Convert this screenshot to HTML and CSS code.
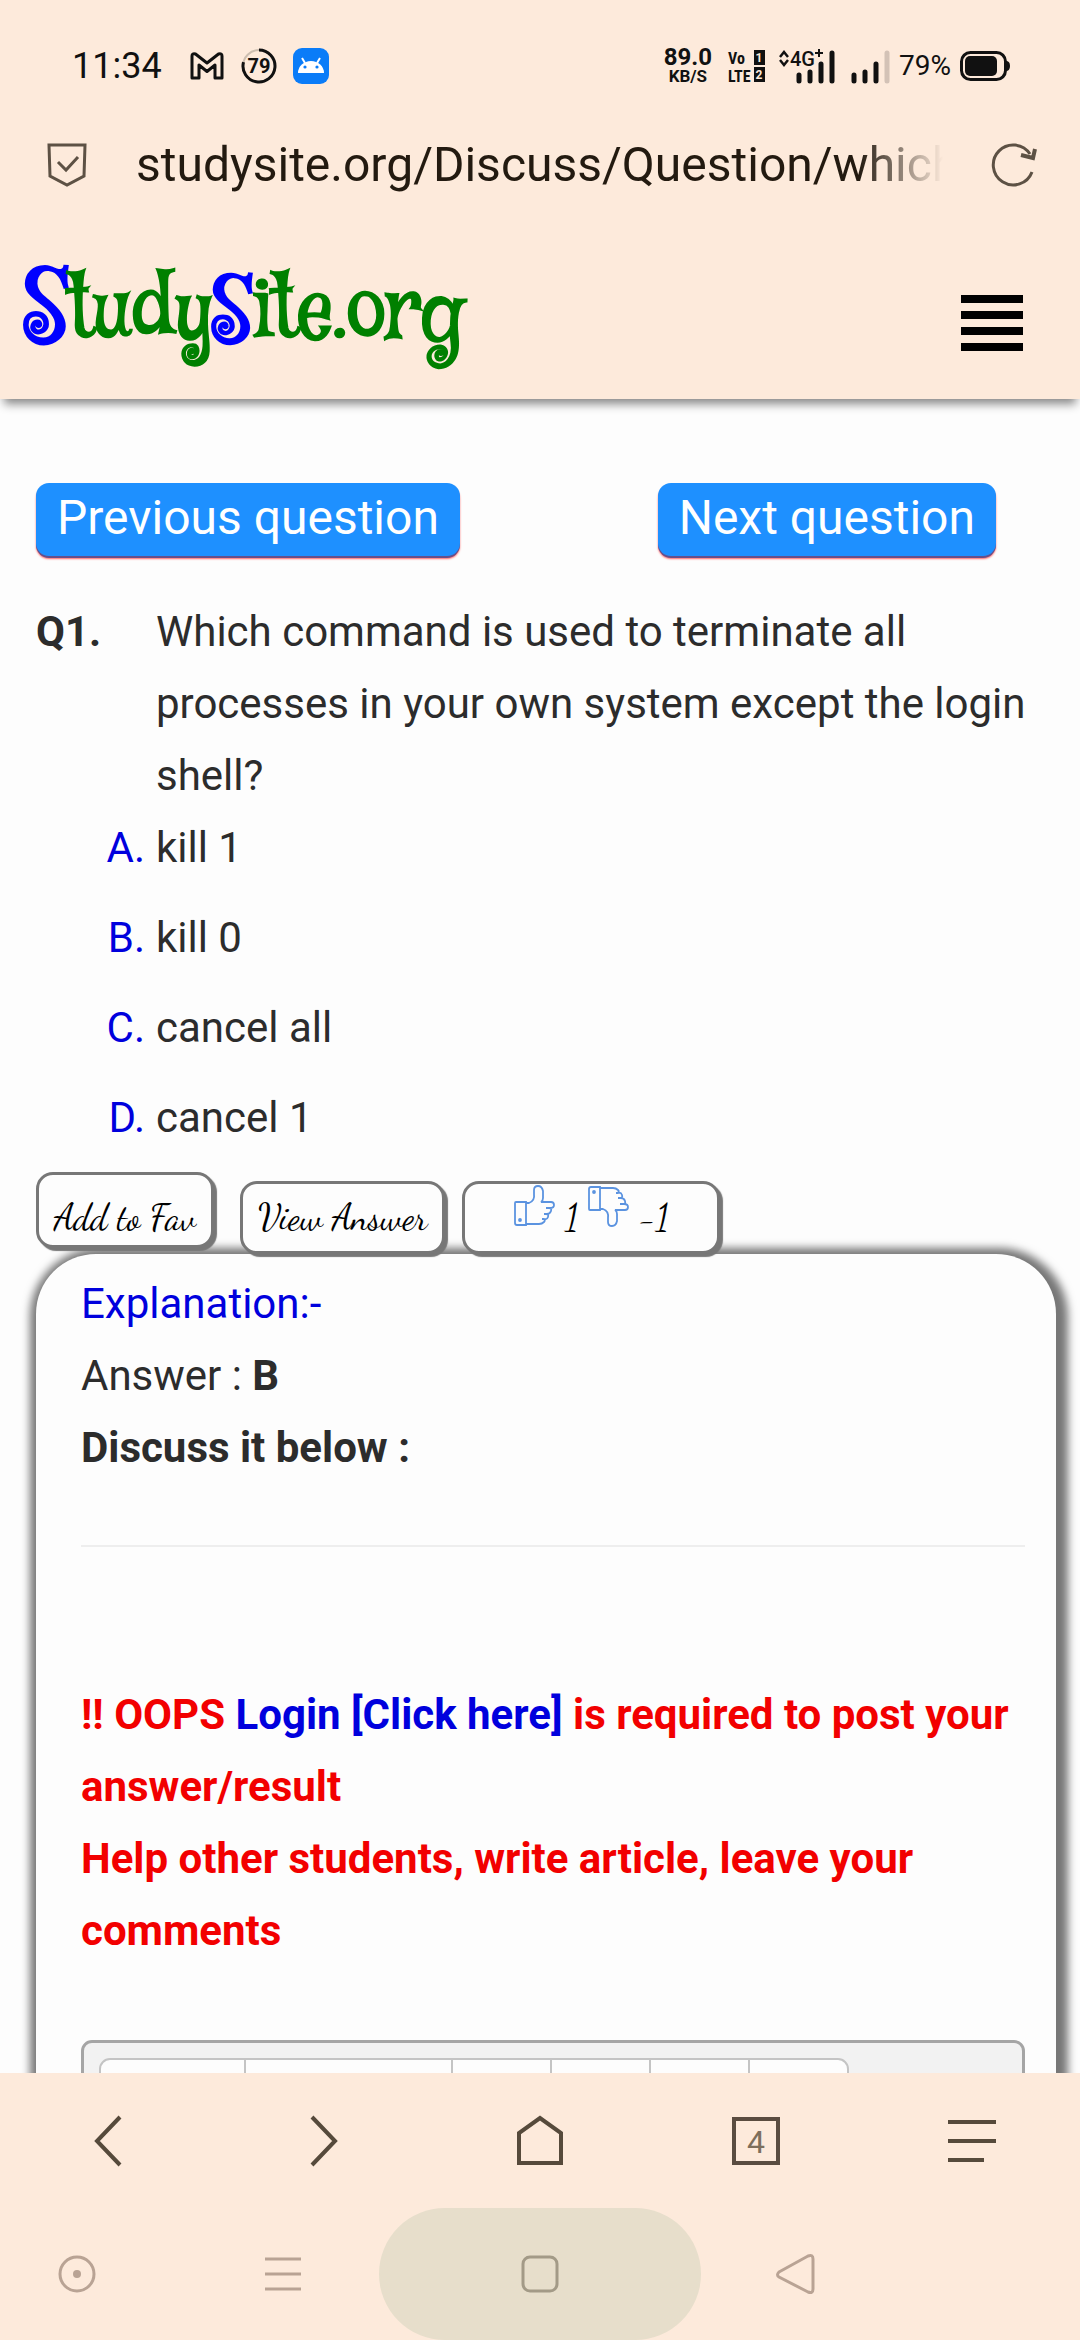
FILE: index.html
```html
<!DOCTYPE html>
<html lang="en">
<head>
<meta charset="utf-8">
<meta name="viewport" content="width=device-width, initial-scale=1">
<title>StudySite.org</title>
<link rel="stylesheet" href="styles.css">
</head>
<body>
<div class="status">
  <span class="clock">11:34</span>
  <svg class="s-mail" width="34" height="28" viewBox="0 0 34 28" fill="none" stroke="#111" stroke-width="3" stroke-linejoin="round"><path d="M2 4q0-3 3.500-2L17 11 28.500 2q3.500-1 3.500 2v22h-7V13l-8 6.500L9 13v13H2z"/></svg>
  <svg class="s-ring" width="36" height="36" viewBox="0 0 36 36"><circle cx="18" cy="18" r="16" fill="none" stroke="#cdbfb1" stroke-width="2"/><path d="M18 2A16 16 0 1 1 2.500 14" fill="none" stroke="#111" stroke-width="3"/><text x="18" y="25" text-anchor="middle" class="t-ring">79</text></svg>
  <svg class="s-droid" width="36" height="36" viewBox="0 0 36 36"><rect width="36" height="36" rx="9" fill="#0a7cf8"/><path d="M5 25a13 12 0 0 1 26 0z" fill="#fff"/><path d="M12 15l-3-5M24 15l3-5" stroke="#fff" stroke-width="2"/><circle cx="12" cy="19" r="1.600" fill="#0a7cf8"/><circle cx="24" cy="19" r="1.600" fill="#0a7cf8"/></svg>
  <div class="speed"><span class="rate">89.0</span><span class="unit">KB/S</span></div>
  <svg class="s-lte" width="38" height="34" viewBox="0 0 38 34"><text x="0" y="15" class="t-lte">Vo</text><text x="0" y="33" class="t-lte">LTE</text><rect x="26" y="1" width="11" height="15" fill="#111"/><rect x="26" y="18" width="11" height="15" fill="#111"/><text x="31" y="13" text-anchor="middle" class="t-sim">1</text><text x="31" y="30" text-anchor="middle" class="t-sim">2</text></svg>
  <svg class="s-sig" width="58" height="34" viewBox="0 0 58 34"><path d="M2 8l4-5 4 5M2 11l4 5 4-5" fill="none" stroke="#111" stroke-width="2.500"/><text x="12" y="17" class="t-4g">4G</text><path d="M37 4h8M41 0v8" stroke="#111" stroke-width="2"/><path d="M21 26v6M32 23v9M43 15v17M54 4v28" stroke="#111" stroke-width="5" stroke-linecap="round"/></svg>
  <svg class="s-sig2" width="40" height="34" viewBox="0 0 40 34"><path d="M4 26v6M15 23v9M26 15v17" stroke="#111" stroke-width="5" stroke-linecap="round"/><path d="M37 4v28" stroke="#d3c2b6" stroke-width="5" stroke-linecap="round"/></svg>
  <span class="pct">79%</span>
  <svg class="s-bat" width="50" height="30" viewBox="0 0 50 30"><rect x="1.500" y="1.500" width="44" height="27" rx="9" fill="none" stroke="#111" stroke-width="3"/><rect x="5" y="5" width="32" height="20" rx="5" fill="#111"/><path d="M46 10q4 0 4 5t-4 5z" fill="#111"/></svg>
</div>
<div class="address">
  <svg width="40" height="46" viewBox="0 0 40 46" fill="none" stroke="#5d5144" stroke-width="3"><path d="M2 3h36l-1 31-17 9-17-9z"/><path d="M11 20l8 8 12-13"/></svg>
  <span class="url">studysite.org/Discuss/Question/which</span>
  <button class="plain" aria-label="Reload"><svg width="46" height="46" viewBox="0 0 46 46" fill="none" stroke="#5d5144" stroke-width="3"><path d="M40 30A20 20 0 1 1 38 12"/><path d="M43 7l-2 9-12-3" stroke-width="4"/></svg></button>
</div>
<header class="site">
  <a class="logo" href="#"><span class="big">S</span>tudy<span class="mid">S</span>ite.org</a>
  <button class="plain" aria-label="Menu"><svg width="62" height="56" viewBox="0 0 62 56"><path d="M0 4h62M0 20h62M0 36h62M0 52h62" stroke="#000" stroke-width="8"/></svg></button>
</header>
<main>
  <nav class="pager"><a href="#">Previous question</a><a href="#">Next question</a></nav>
  <section class="question"><b>Q1.</b><p>Which command is used to terminate all processes in your own system except the login shell?</p></section>
  <ul class="options">
    <li><span>A.</span>kill 1</li>
    <li><span>B.</span>kill 0</li>
    <li><span>C.</span>cancel all</li>
    <li><span>D.</span>cancel 1</li>
  </ul>
  <div class="actions">
    <button class="pill fav">Add to Fav</button>
    <button class="pill">View Answer</button>
    <div class="pill votes">
      <button class="plain" aria-label="Like"><svg width="42" height="42" viewBox="0 0 42 42" fill="none" stroke="#5b93e0" stroke-width="1.800"><g id="thumb"><path d="M1 18q0-1 1-1h10v23H3q-2 0-2-2zM12 18h3q6-2 5-9V5q0-4 4-4t5 5v7q0 3-2 4h10q3 0 3 3t-4 3h-4 3q3 0 2 3t-4 3h-3 2q3 0 2 3t-4 2h-2 1q3 1 1 3t-5 2H12"/><circle cx="6" cy="35" r="1"/></g></svg></button>
      <span>1</span>
      <button class="plain" aria-label="Dislike"><svg width="42" height="42" viewBox="0 0 42 42" fill="none" stroke="#5b93e0" stroke-width="1.800"><use href="#thumb" transform="matrix(1 0 0 -1 0 42)"/></svg></button>
      <span>-1</span>
    </div>
  </div>
  <section class="card">
    <p class="title">Explanation:-</p>
    <p>Answer : <b>B</b></p>
    <p><b>Discuss it below :</b></p>
    <hr>
    <p class="alert">!! OOPS <a href="#">Login [Click here]</a> is required to post your answer/result<br>Help other students, write article, leave your comments</p>
    <div class="editor"><div class="tools"><i></i><i></i><i></i><i></i><i></i><i></i></div></div>
  </section>
</main>
<nav class="browser">
  <button class="plain" aria-label="Back"><svg width="60" height="60" viewBox="0 0 60 60"><path d="M42 6L19 30l23 24"/></svg></button>
  <button class="plain" aria-label="Forward"><svg width="60" height="60" viewBox="0 0 60 60"><path d="M18 6l23 24-23 24"/></svg></button>
  <button class="plain" aria-label="Home"><svg width="60" height="60" viewBox="0 0 60 60"><path d="M9 52V22L30 7l21 15v30z"/></svg></button>
  <button class="plain tabs" aria-label="Tabs">4</button>
  <button class="plain" aria-label="Browser menu"><svg width="60" height="60" viewBox="0 0 60 60"><path d="M6 11h48M6 30h48M6 49h36"/></svg></button>
</nav>
<nav class="system">
  <svg width="44" height="44" viewBox="0 0 44 44"><circle cx="22" cy="22" r="17"/><circle cx="22" cy="22" r="4" fill="#b9a394" stroke="none"/></svg>
  <svg width="44" height="44" viewBox="0 0 44 44"><path d="M4 7h36M4 22h36M4 37h36"/></svg>
  <div class="home"><svg width="44" height="44" viewBox="0 0 44 44"><rect x="5" y="5" width="34" height="34" rx="7" stroke="#a39a87"/></svg></div>
  <svg width="44" height="44" viewBox="0 0 44 44"><path d="M4 20L33 4q5-2 5 3v30q0 5-5 3L4 25q-3-2 0-5z"/></svg>
</nav>
</body>
</html>
```
FILE: styles.css
```css
* { box-sizing: border-box; }
body {
  margin: 0;
  height: 100vh;
  display: flex;
  flex-direction: column;
  overflow: hidden;
  background: #fdeadb;
  color: #2c2c2c;
  font-family: Roboto, sans-serif;
  font-size: 42px;
  line-height: 72px;
}
p, ul { margin: 0; padding: 0; }
svg { display: block; flex: none; overflow: visible; }
a { color: #0000dd; text-decoration: none; }
.plain { display: block; border: 0; padding: 0; background: none; color: inherit; font: inherit; }

.status {
  flex: none;
  display: flex;
  align-items: center;
  height: 132px;
  padding: 0 70px 0 72px;
  color: #111;
  line-height: 36px;
}
.clock { font-size: 36px; margin-right: 28px; }
.s-mail { margin-right: 17px; }
.s-ring { margin-right: 16px; }
.s-droid { margin-right: auto; }
.t-ring { font: 700 20px Roboto, sans-serif; fill: #111; }
.speed { display: grid; justify-items: center; margin-right: 16px; font-weight: 700; }
.rate { font-size: 24px; line-height: 20px; }
.unit { font-size: 17px; line-height: 18px; }
.s-lte { margin-right: 12px; }
.t-lte { font: 700 18px "Roboto Condensed", Roboto, sans-serif; font-size: 16px; fill: #111; }
.t-sim { font: 700 12px Roboto, sans-serif; fill: #fdeadb; }
.s-sig { margin-right: 14px; }
.t-4g { font: 500 20px Roboto, sans-serif; fill: #111; }
.s-sig2 { margin-right: 9px; }
.pct { font-size: 28px; margin-right: 9px; }

.address {
  flex: none;
  display: flex;
  align-items: center;
  height: 74px;
  padding: 0 42px 8px 47px;
  color: #231a10;
}
.url {
  flex: 1;
  min-width: 0;
  margin: 0 49px;
  overflow: hidden;
  white-space: nowrap;
  font-size: 48px;
  line-height: 60px;
  -webkit-mask-image: linear-gradient(to left, transparent, #000 84px);
  mask-image: linear-gradient(to left, transparent, #000 84px);
}

.site {
  flex: none;
  position: relative;
  display: flex;
  align-items: center;
  justify-content: space-between;
  height: 193px;
  padding: 40px 57px 0 24px;
  background: #fdeadb;
  box-shadow: 0 9px 9px -4px #888;
}
.logo {
  padding-bottom: 22px;
  color: #008000;
  font-family: "Mystery Quest", "Liberation Serif", serif;
  font-size: 80px;
  font-weight: 700;
  line-height: 110px;
}
.logo span { color: #0000ff; }
.big { font-size: 92px; }
.mid { font-size: 84px; }

main {
  flex: 1;
  min-height: 0;
  overflow: hidden;
  padding: 84px 24px 0 36px;
  background: #fdfdfd;
}
.pager { display: flex; justify-content: space-between; margin-right: 60px; }
.pager a {
  padding: 5px 21px 8px;
  border-radius: 13px;
  background: #1e90ff;
  box-shadow: 0 2px 0 #66508a, 0 3px 2px rgba(255, 0, 0, .6);
  color: #fff;
  font-size: 48px;
  line-height: 60px;
}
.question { display: flex; margin: 40px 20px 0 0; }
.question b { flex: none; width: 120px; }
.options { display: grid; gap: 18px; list-style: none; }
.options li { display: flex; gap: 11px; }
.options span { width: 109px; text-align: right; color: #0000dd; }

.actions { position: relative; z-index: 1; display: flex; align-items: flex-start; margin-top: 18px; }
.pill {
  margin: 9px 17px 0 0;
  padding: 16px 15px 15px;
  border: 3px solid #777;
  border-radius: 17px;
  background: #fdfdfd;
  box-shadow: 3px 3px 1px #777;
  color: #000;
  font: 36px/36px "Dancing Script", "Liberation Serif", serif;
}
.fav { margin: 0 26px 0 0; padding: 25px 15px 9px; }
.votes { display: flex; align-items: flex-start; padding: 1px 48px 15px 49px; }
.votes span { margin: 15px 9px 0; }
.votes span:last-child { margin-right: 0; }

.card {
  padding: 14px 31px 0 45px;
  border-radius: 60px 60px 0 0;
  background: #fdfdfd;
  box-shadow: 3px 3px 9px 9px #777;
  height: 1200px;
}
.title { color: #0000dd; }
hr { margin: 61px 0 132px; border: 0; border-top: 2px solid #eee; }
.alert { color: #f20000; font-weight: 700; }
.editor {
  margin-top: 73px;
  padding: 15px;
  height: 400px;
  border: 3px solid #a5a5a5;
  border-radius: 11px;
  background: #f2f2f2;
}
.tools {
  display: grid;
  grid-template-columns: 143px 207px 99px 99px 99px 99px;
  width: max-content;
  height: 80px;
  border: 2px solid #c4c4c4;
  border-radius: 11px;
  background: #fdfdfd;
}
.tools i + i { border-left: 2px solid #c4c4c4; }

.browser {
  position: relative;
  z-index: 2;
  flex: none;
  display: grid;
  grid-template-columns: repeat(5, 1fr);
  place-items: center;
  height: 135px;
  background: #fdeadb;
}
.browser svg { fill: none; stroke: #564a3b; stroke-width: 4; }
.browser .tabs {
  width: 48px;
  height: 48px;
  border: 4px solid #5a4c40;
  color: #7d6f5c;
  font-size: 32px;
  line-height: 42px;
}
.system {
  position: relative;
  z-index: 2;
  flex: none;
  display: grid;
  grid-template-columns: 3fr 5fr 5fr 5fr 3fr;
  place-items: center;
  height: 132px;
  background: #fdeadb;
}
.system svg { fill: none; stroke: #b9a394; stroke-width: 3; }
.home {
  display: grid;
  place-items: center;
  width: 322px;
  height: 132px;
  margin: 0 -40px;
  border-radius: 66px;
  background: #e7decb;
}
```
